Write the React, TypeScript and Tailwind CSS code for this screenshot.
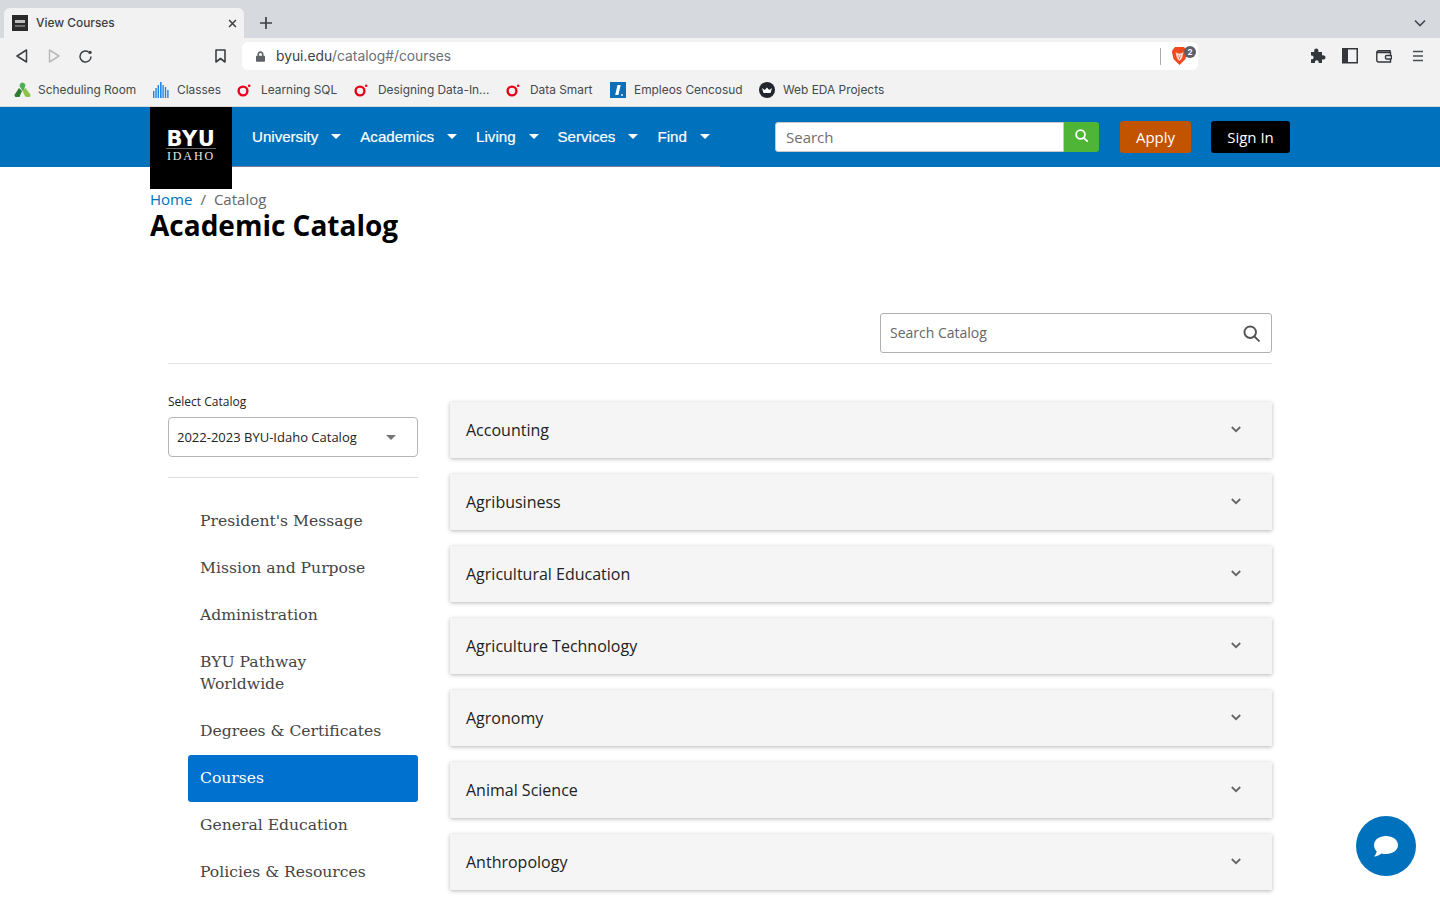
import { FaLock } from "react-icons/fa";

const bookmarks = [
	{ label: "Scheduling Room", icon: "sched", width: "w-[139px]" },
	{ label: "Classes", icon: "bars", width: "w-[84px]" },
	{ label: "Learning SQL", icon: "oreilly", width: "w-[117px]" },
	{ label: "Designing Data-In...", icon: "oreilly", width: "w-[152px]" },
	{ label: "Data Smart", icon: "oreilly", width: "w-[104px]" },
	{ label: "Empleos Cencosud", icon: "info", width: "w-[149px]" },
	{ label: "Web EDA Projects", icon: "crown", width: "w-[140px]" },
];

const navItems = ["University", "Academics", "Living", "Services", "Find"];

const sideLinks = [
	"President's Message",
	"Mission and Purpose",
	"Administration",
	"BYU Pathway Worldwide",
	"Degrees & Certificates",
	"Courses",
	"General Education",
	"Policies & Resources",
];

const subjects = [
	"Accounting",
	"Agribusiness",
	"Agricultural Education",
	"Agriculture Technology",
	"Agronomy",
	"Animal Science",
	"Anthropology",
];

function SearchGlyph({ size, color, width }: { size: number; color: string; width: number }) {
	return (
		<svg width={size} height={size} viewBox="0 0 16 16" fill="none" stroke={color} strokeWidth={width} strokeLinecap="round">
			<circle cx="6.8" cy="6.8" r="5.4" />
			<path d="M10.8 10.8 15 15" />
		</svg>
	);
}

function BookmarkIcon({ kind }: { kind: string }) {
	if (kind === "sched") {
		return (
			<svg width="17" height="16" viewBox="0 0 17 16">
				<path d="M5 6 8 9 5.500 15H1.500Q0 14 .7 12.500Z" fill="#2e7d32" />
				<path d="M11.500 6 16.300 12.500Q17 14 15.500 15H12.500Q11.500 15 11 14L8.500 9Z" fill="#8bc34a" />
				<path d="M8.500 .5Q10.500 .5 11.500 3L10 7.500 8.500 9 5.500 4Q6 .5 8.500 .5Z" fill="#4caf50" />
			</svg>
		);
	}
	if (kind === "bars") {
		return (
			<svg width="16" height="16" viewBox="0 0 16 16" fill="#1e88e5">
				<rect x="0" y="9" width="1.4" height="7" />
				<rect x="2.3" y="6" width="1.4" height="10" />
				<rect x="4.6" y="3" width="1.4" height="13" />
				<rect x="7" y="0" width="1.6" height="16" />
				<rect x="9.4" y="3" width="1.4" height="13" />
				<rect x="11.8" y="5" width="1.4" height="11" />
				<rect x="14.2" y="8" width="1.4" height="8" />
			</svg>
		);
	}
	if (kind === "oreilly") {
		return (
			<svg width="14" height="14" viewBox="0 0 14 14">
				<circle cx="6" cy="8" r="4.4" fill="none" stroke="#e3051b" strokeWidth="2.4" />
				<circle cx="12.2" cy="2.8" r="1.3" fill="#e3051b" />
			</svg>
		);
	}
	if (kind === "info") {
		return (
			<svg width="16" height="16" viewBox="0 0 16 16">
				<rect width="16" height="16" fill="#0d6fb8" />
				<path d="M7.500 3h3.200L8.400 13H5.200Z" fill="#fff" />
				<circle cx="12" cy="13" r="0.9" fill="#fff" />
			</svg>
		);
	}
	return (
		<svg width="16" height="16" viewBox="0 0 16 16">
			<circle cx="8" cy="8" r="8" fill="#23262e" />
			<path d="M3 6 5.800 8 8 5.500 10.200 8 13 6 11.500 11h-7Z" fill="#fff" />
		</svg>
	);
}

function BrowserChrome() {
	return (
		<div className="font-['Inter',sans-serif] text-[#3c4043]">
			<div className="flex h-[38px] items-end bg-[#d6d9de] pl-1 pr-[14px]">
				<div className="flex h-[30px] w-[240px] items-center rounded-t-md bg-[#f2f2f2] pl-2 pr-[7px]">
					<div className="flex h-4 w-4 flex-col items-center justify-center bg-[#2a2a2a]">
						<span className="h-[3px] w-[10px] bg-[#bdbdbd]" />
						<span className="mt-[2px] h-[2px] w-[10px] bg-[#6f6f6f]" />
					</div>
					<span className="ml-2 flex-1 text-[11.9px] font-medium">View Courses</span>
					<svg width="9" height="9" viewBox="0 0 10 10" stroke="#3c4043" strokeWidth="1.7">
						<path d="M1.2 1.200l7.600 7.600M8.800 1.200 1.200 8.800" />
					</svg>
				</div>
				<div className="ml-[15px] flex h-[30px] items-center">
					<svg width="14" height="14" viewBox="0 0 14 14" stroke="#3c4043" strokeWidth="1.7">
						<path d="M7 1v12M1 7h12" />
					</svg>
				</div>
				<div className="ml-auto flex h-[30px] items-center">
					<svg width="12" height="8" viewBox="0 0 12 8" fill="none" stroke="#45484d" strokeWidth="1.6">
						<path d="M1 1.500 6 6.500 11 1.500" />
					</svg>
				</div>
			</div>
			<div className="flex h-9 items-center bg-[#f2f2f2] pl-4 pr-4">
				<svg width="12" height="14" viewBox="0 0 12 14" fill="none" stroke="#3c4043" strokeWidth="1.5" strokeLinejoin="round">
					<path d="M10.500 1v12L1 7Z" />
				</svg>
				<svg className="ml-5" width="12" height="14" viewBox="0 0 12 14" fill="none" stroke="#b9babc" strokeWidth="1.5" strokeLinejoin="round">
					<path d="M1.500 1v12L11 7Z" />
				</svg>
				<svg className="ml-[18px]" width="15" height="15" viewBox="0 0 15 15" fill="none" stroke="#3c4043" strokeWidth="1.5">
					<path d="M13 7.500A5.500 5.500 0 1 1 10.500 2.900" />
					<circle cx="12" cy="3.400" r="1.700" fill="#3c4043" stroke="none" />
				</svg>
				<svg className="ml-[122px]" width="11" height="14" viewBox="0 0 11 14" fill="none" stroke="#3c4043" strokeWidth="1.6" strokeLinejoin="round">
					<path d="M1 1h9v12L5.500 9.500 1 13Z" />
				</svg>
				<div className="ml-4 flex h-7 w-[956px] items-center rounded-md bg-white pl-[14px] pr-1 text-[13.8px]">
					<FaLock className="h-[11px] w-[9px] text-[#5f6368]" />
					<span className="ml-[11px] text-[#3c4043]">byui.edu</span>
					<span className="text-[#6b6f75]">/catalog#/courses</span>
					<span className="ml-auto h-[17px] w-px bg-[#a9abae]" />
					<div className="relative ml-[11px] mr-[7px] h-[18px] w-[15px]">
						<svg width="15" height="18" viewBox="0 0 15 18">
							<path d="M3 0h9l2.500 3L15 5 13.500 12 7.500 18 1.500 12 0 5 .5 3Z" fill="#f1481c" />
							<path d="M3.500 5 6 6.500H9L11.500 5 10.500 9.500 9.500 12 7.500 14 5.500 12 4.500 9.500Z" fill="#fff" opacity="0.8" />
							<path d="M6 9h1M8 9h1M7.500 10v2" stroke="#f1481c" strokeWidth="0.8" />
						</svg>
						<span className="absolute -right-[9px] -top-px flex h-3 w-3 items-center justify-center rounded-full bg-[#5c5f6b] text-[8px] font-bold text-white">
							2
						</span>
					</div>
				</div>
				<svg className="ml-[112px]" width="16" height="16" viewBox="0 0 16 16" fill="#33363b">
					<path d="M1 4h3.200C3.800 1.500 5 .5 6.300.5S8.800 1.500 8.400 4H12v3.400c2.300-.5 3.500.6 3.500 2s-1.200 2.500-3.500 2V15H8.600c.4-1.800-.6-2.700-1.800-2.700S4.600 13.200 5 15H1v-3.800c1.600.4 2.600-.6 2.600-1.800S2.600 7.200 1 7.600Z" />
				</svg>
				<svg className="ml-4" width="16" height="16" viewBox="0 0 16 16">
					<rect x="0.750" y="0.750" width="14.500" height="14" fill="none" stroke="#33363b" strokeWidth="1.500" />
					<rect x="1" y="1" width="5" height="13.500" fill="#33363b" />
				</svg>
				<svg className="ml-[18px]" width="16" height="14" viewBox="0 0 16 14" fill="none" stroke="#33363b" strokeWidth="1.400">
					<path d="M14 3V1.800H2.500A1.700 1.700 0 0 0 .8 3.500v7.800A1.700 1.700 0 0 0 2.500 13H14.500V3.500H1" />
					<rect x="9.500" y="6.500" width="6" height="3.500" rx="1" fill="#f2f2f2" />
				</svg>
				<svg className="ml-[21px]" width="10" height="12" viewBox="0 0 10 12" stroke="#4a4d52" strokeWidth="1.500">
					<path d="M0 1.500h10M0 6h10M0 10.500h10" />
				</svg>
			</div>
			<div className="flex h-8 items-center bg-[#f2f2f2] pl-[14px] text-[11.9px] text-[#46494d]">
				{bookmarks.map((bookmark) => (
					<div key={bookmark.label} className={`flex items-center ${bookmark.width}`}>
						<span className="flex w-6 shrink-0 items-center">
							<BookmarkIcon kind={bookmark.icon} />
						</span>
						<span className="whitespace-nowrap">{bookmark.label}</span>
					</div>
				))}
			</div>
			<div className="h-px bg-[#d8d8d8]" />
		</div>
	);
}

function SiteHeader() {
	return (
		<header className="relative flex h-[60px] bg-[#0071bc] pl-[229px]">
			<div className="absolute left-[150px] top-0 flex h-[82px] w-[82px] flex-col items-center justify-center bg-black pb-[5px] text-white">
				<span className="border-b border-[#666] pt-[3px] font-['DejaVu_Sans',sans-serif] text-[21px] font-bold leading-[17px] tracking-[0.7px]">
					BYU
				</span>
				<span className="font-['Liberation_Serif',serif] text-[12px] leading-[14px] tracking-[1.9px] text-[#e8e8e8]">IDAHO</span>
			</div>
			<nav className="flex h-[60px] w-[491px] items-center gap-[19px] border-b border-[#6f8296] pl-[23px] pt-px font-['Liberation_Sans',sans-serif] text-[15.100px] text-white">
				{navItems.map((item) => (
					<div key={item} className="flex items-center gap-[13px]">
						<span className="[-webkit-text-stroke:0.2px_white]">{item}</span>
						<span className="h-0 w-0 border-x-[5px] border-t-[5px] border-x-transparent border-t-white" />
					</div>
				))}
			</nav>
			<div className="ml-[55px] mt-[15px] flex h-[30px] w-[324px] font-['Open_Sans',sans-serif]">
				<div className="flex flex-1 items-center rounded-l-[3px] border border-[#c8c8c8] bg-white px-[10px] text-[15px] text-[#6f6f6f]">
					Search
				</div>
				<div className="flex w-[35px] items-center justify-center rounded-r-[3px] bg-[#4eb536] pb-[3px]">
					<SearchGlyph size={13} color="#fff" width={2.2} />
				</div>
			</div>
			<button
				type="button"
				className="ml-[21px] mt-[14px] h-8 w-[71px] rounded-[3px] bg-[#c25400] font-['Open_Sans',sans-serif] text-[15px] font-medium text-white"
			>
				Apply
			</button>
			<button
				type="button"
				className="ml-5 mt-[14px] h-8 w-[79px] rounded-[3px] bg-black font-['Open_Sans',sans-serif] text-[15px] font-medium text-white"
			>
				Sign In
			</button>
		</header>
	);
}

function Sidebar() {
	return (
		<aside className="-mt-[9px] w-[250px] shrink-0">
			<label className="block text-xs leading-[18px] text-[#222]">Select Catalog</label>
			<div className="mt-[6px] flex h-10 items-center justify-between rounded border border-[#b5b5b5] pl-2 pr-[21px] pt-px text-[13px] text-[#222]">
				<span>2022-2023 BYU-Idaho Catalog</span>
				<span className="h-0 w-0 border-x-[5px] border-t-[5px] border-x-transparent border-t-[#757575]" />
			</div>
			<div className="mt-5 h-px bg-[#ddd]" />
			<ul className="mt-5 pl-5 font-['DejaVu_Serif',serif] text-[15.600px] leading-[22px] text-[#444]">
				{sideLinks.map((link) => (
					<li
						key={link}
						className={
							link === "Courses"
								? "rounded-[3px] bg-[#0071ce] pb-[13px] pl-3 pr-9 pt-3 text-white"
								: "pb-[13px] pl-3 pr-9 pt-3"
						}
					>
						{link}
					</li>
				))}
			</ul>
		</aside>
	);
}

function SubjectList() {
	return (
		<div className="flex flex-1 flex-col gap-4">
			{subjects.map((subject) => (
				<div
					key={subject}
					className="flex h-14 shrink-0 items-center justify-between bg-[#f5f5f5] pl-4 pr-[31px] shadow-[0_1px_4px_rgba(0,0,0,0.28)]"
				>
					<span className="text-base text-[#222]">{subject}</span>
					<svg className="mb-[2px]" width="10" height="7" viewBox="0 0 10 7" fill="none" stroke="#666" strokeWidth="1.800">
						<path d="M.8 1 5 5.200 9.200 1" />
					</svg>
				</div>
			))}
		</div>
	);
}

export default function App() {
	return (
		<div className="relative h-[900px] overflow-hidden bg-white font-['Open_Sans',sans-serif]">
			<BrowserChrome />
			<SiteHeader />
			<div className="pl-[150px] pt-[22px] text-[15px] leading-[20px]">
				<span className="text-[#0071bc]">Home</span>
				<span className="px-2 text-[#666]">/</span>
				<span className="text-[#666]">Catalog</span>
			</div>
			<h1 className="-mt-px pl-[150px] text-[28px] font-bold leading-[34px] text-black">Academic Catalog</h1>
			<main className="mx-[168px] mt-[71px]">
				<div className="flex justify-end">
					<div className="flex h-10 w-[392px] items-center justify-between rounded-[3px] border border-[#b0b0b0] pl-[9px] pr-[11px] text-sm text-[#666]">
						<span>Search Catalog</span>
						<SearchGlyph size={17} color="#555" width={1.800} />
					</div>
				</div>
				<div className="mt-[10px] h-px bg-[#e2e2e2]" />
				<div className="mt-[38px] flex gap-8">
					<Sidebar />
					<SubjectList />
				</div>
			</main>
			<div className="absolute left-[1356px] top-[816px] flex h-[60px] w-[60px] items-center justify-center rounded-full bg-[#0071bc]">
				<svg width="26" height="24" viewBox="0 0 26 24">
					<path d="M13 2c6.600 0 12 3.800 12 9s-5.400 9-12 9c-1.500 0-3-.2-4.300-.6C6.500 21 4 22 1 22.500c1.600-1.500 2.400-3.200 2.700-5C2 15.800 1 13.500 1 11 1 5.800 6.400 2 13 2Z" fill="#fff" />
				</svg>
			</div>
		</div>
	);
}
